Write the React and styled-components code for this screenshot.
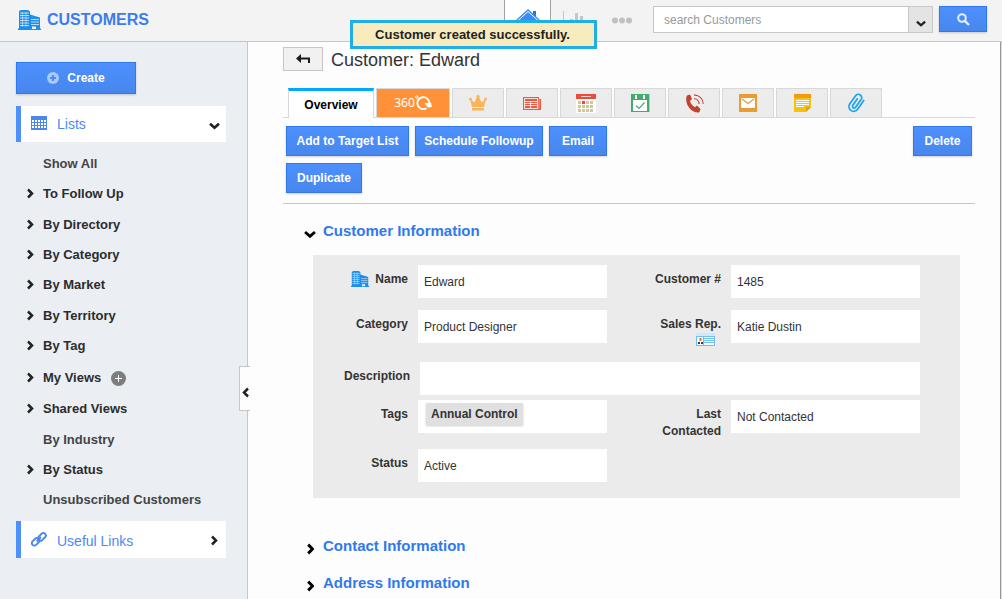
import React from "react";
import styled, { createGlobalStyle, css } from "styled-components";

const GlobalStyle = createGlobalStyle`
  * { box-sizing: border-box; }
  body {
    margin: 0;
    background: #fdfdfd;
    color: #333;
    font-family: "Liberation Sans", Arial, sans-serif;
    font-size: 12px;
  }
  button, input { font: inherit; }
  button { cursor: pointer; }
`;

/* ---------- shell ---------- */

const Page = styled.div`
  display: flex;
  flex-direction: column;
  min-height: 100vh;
`;

const Header = styled.header`
  position: relative;
  display: flex;
  align-items: stretch;
  justify-content: space-between;
  height: 42px;
  padding: 0 15px 0 18px;
  background: #f3f3f3;
  border-bottom: 1px solid #c6c6c6;
`;

const Brand = styled.h1`
  display: flex;
  align-items: center;
  gap: 6px;
  margin: 0;
  padding-bottom: 2px;
  color: #3b7ded;
  font-size: 16px;
  line-height: 20px;
`;

const HeaderTools = styled.div`
  display: flex;
  align-items: flex-start;
`;

const HeaderNav = styled.nav`
  display: flex;
  align-self: stretch;
  margin-right: 3px;
`;

const NavLink = styled.a`
  display: flex;
  align-items: flex-start;
  justify-content: center;
  width: ${(p) => p.$width};
  padding-top: 8px;
  border: solid transparent;
  border-width: 0 1px;
  ${(p) =>
    p.$active &&
    css`
      background: #fff;
      border-color: #a3a3a3;
    `}
`;

const SearchForm = styled.form`
  display: flex;
  height: 27px;
  margin-top: 6px;
`;

const SearchInput = styled.input`
  width: 255px;
  padding: 0 10px;
  border: 1px solid #c8c8c8;
  border-right: 0;
  border-radius: 0;
  background: #fff;
  outline: 0;
  &::placeholder { color: #999; opacity: 1; }
`;

const ScopeButton = styled.button`
  display: flex;
  align-items: center;
  justify-content: center;
  width: 25px;
  margin-right: 6px;
  padding: 8px 0 0;
  border: 1px solid #c8c8c8;
  background: #e4e4e4;
`;

const Toast = styled.div`
  position: absolute;
  top: 20px;
  left: 350px;
  z-index: 2;
  width: 247px;
  padding: 0 2px 0 0;
  border: 3px solid #1eaee8;
  background: #f8ebbd;
  color: #222;
  font-size: 13px;
  font-weight: bold;
  line-height: 23px;
  text-align: center;
`;

const Body = styled.div`
  display: flex;
  flex: 1;
`;

/* ---------- buttons ---------- */

const PrimaryButton = styled.button`
  display: inline-flex;
  align-items: center;
  justify-content: center;
  gap: 8px;
  width: ${(p) => p.$width || "auto"};
  height: ${(p) => p.$height || "30px"};
  padding: 0 8px;
  border: 1px solid #3079ed;
  background: linear-gradient(#4d90fe, #4787ed);
  color: #fff;
  font-weight: bold;
  white-space: nowrap;
  box-shadow: 0 1px 2px rgba(0, 0, 0, 0.18);
`;

/* ---------- sidebar ---------- */

const Sidebar = styled.aside`
  position: relative;
  flex: none;
  width: 248px;
  padding: 20px 21px 20px 16px;
  background: #ebeff4;
  border-right: 1px solid #c6c6c6;
`;

const SideHeading = styled.button`
  display: flex;
  align-items: center;
  width: 100%;
  height: ${(p) => p.$height};
  margin-top: ${(p) => p.$top};
  padding: 0 6px 0 10px;
  border: 0;
  border-left: 5px solid #4d90fe;
  background: #fff;
  color: #4a8af4;
  font-size: 14px;
  text-align: left;
`;

const SideIcon = styled.span`
  display: flex;
  padding-bottom: 2px;
`;

const SideLabel = styled.span`
  flex: 1;
  margin-left: 10px;
  padding-top: ${(p) => p.$pad || "0"};
`;

const SideMark = styled.span`
  display: flex;
  justify-content: center;
  width: 12px;
  padding-top: ${(p) => p.$pad};
`;

const ViewList = styled.ul`
  display: flex;
  flex-direction: column;
  min-height: 367px;
  margin: 6px 0;
  padding: 0 0 0 10px;
  list-style: none;
`;

const ViewItem = styled.li`
  display: flex;
  flex: 1;
  align-items: center;
`;

const ViewMark = styled.span`
  display: flex;
  width: 17px;
`;

const ViewLink = styled.a`
  color: ${(p) => (p.$plain ? "#444" : "#2c2c2c")};
  font-size: 13px;
  font-weight: bold;
  text-decoration: none;
`;

const AddView = styled.button`
  display: flex;
  margin-left: 10px;
  padding: 2px 0 0;
  border: 0;
  background: none;
`;

const Collapse = styled.button`
  position: absolute;
  top: 324px;
  right: -3px;
  display: flex;
  align-items: center;
  justify-content: center;
  width: 11px;
  height: 45px;
  padding: 8px 0 0 1px;
  border: 1px solid #c6c6c6;
  border-right: 0;
  background: #fdfdfd;
`;

/* ---------- main ---------- */

const Main = styled.main`
  flex: 1;
  min-width: 0;
  padding: 5px 25px 5px 35px;
`;

const ScrollEdge = styled.div`
  width: 2px;
  background: #dcdcd8;
  border-left: 1px solid #999;
`;

const TitleRow = styled.div`
  display: flex;
  align-items: center;
  gap: 8px;
  margin-bottom: 17px;
`;

const BackButton = styled.button`
  display: flex;
  align-items: center;
  justify-content: center;
  width: 40px;
  height: 24px;
  padding: 0;
  border: 1px solid #c6c6c6;
  background: #f1f1f1;
`;

const Title = styled.h2`
  margin: 0;
  font-size: 18px;
  font-weight: normal;
  line-height: 22px;
  padding-top: 2px;
`;

const Tabs = styled.div`
  display: flex;
  align-items: stretch;
  gap: 2px;
  height: 30px;
  padding-left: 5px;
  border-bottom: 1px solid #d8d8d8;
`;

const tabKinds = {
  icon: css`
    width: 52px;
    background: #ececec;
  `,
  active: css`
    width: 86px;
    margin-bottom: -1px;
    border-top: 3px solid #00a8ff;
    background: #fff;
    color: #000;
  `,
  orange: css`
    width: 74px;
    background: #ff9238;
  `,
};

const Tab = styled.button`
  display: flex;
  align-items: center;
  justify-content: center;
  padding: 0;
  border: 1px solid #d8d8d8;
  border-bottom: 0;
  font-weight: bold;
  ${(p) => tabKinds[p.$kind || "icon"]}
`;

const Actions = styled.div`
  display: flex;
  align-items: flex-start;
  justify-content: space-between;
  padding: 8px 3px 10px;
  border-bottom: 1px solid #c6c6c6;
`;

const ActionGroup = styled.div`
  display: flex;
  flex: 0 1 55%;
  flex-wrap: wrap;
  gap: 7px 6px;
`;

const SectionHeader = styled.h3`
  margin: ${(p) => p.$top} 0 0;
  font-size: 15px;
  line-height: 20px;
`;

const SectionToggle = styled.button`
  display: flex;
  align-items: center;
  padding: 0 0 0 21px;
  border: 0;
  background: none;
  color: #3079ed;
  font-weight: bold;
`;

const SectionMark = styled.span`
  display: flex;
  justify-content: center;
  width: 12px;
  margin-right: 7px;
  padding-top: 6px;
`;

const Panel = styled.div`
  margin: 14px 15px 0 30px;
  padding: 10px 40px 0 0;
  background: #ebebeb;
`;

const FormRow = styled.div`
  display: grid;
  grid-template-columns: ${(p) =>
    p.$wide ? "107px 1fr" : "105px 1fr 124px 1fr"};
  align-items: start;
  padding-bottom: ${(p) => p.$gap};
`;

const Label = styled.label`
  padding: 6px 10px 0 0;
  padding-left: ${(p) => (p.$narrow ? "50px" : "0")};
  font-weight: bold;
  line-height: 17px;
  text-align: right;
`;

const LabelIcon = styled.span`
  display: inline-block;
  height: 17px;
  margin-right: 6px;
  vertical-align: top;
`;

const RepIcon = styled.span`
  display: flex;
  justify-content: flex-end;
  height: 16px;
  padding-right: 6px;
`;

const Field = styled.input`
  width: 100%;
  min-width: 0;
  height: 33px;
  padding: 0 6px;
  border: 0;
  border-radius: 0;
  background: #fff;
  color: #333;
  outline: 0;
`;

const TagBox = styled.div`
  display: flex;
  height: 33px;
  padding: 3px 8px;
  background: #fff;
`;

const Tag = styled.span`
  height: 22px;
  padding: 0 5px;
  background: #e0e0e0;
  font-weight: bold;
  line-height: 22px;
  box-shadow: 0 1px 2px rgba(0, 0, 0, 0.2);
`;

/* ---------- icons ---------- */

const chevronPaths = {
  right: "M2 1.5 L6 5.5 L2 9.5",
  left: "M6 1.5 L2 5.5 L6 9.5",
};

const Chevron = ({ dir = "right", color = "#222", size = 9, weight = 2.5 }) => (
  <svg width={(size * 8) / 11} height={size} viewBox="0 0 8 11" fill="none" stroke={color} strokeWidth={weight}>
    <path d={chevronPaths[dir]} />
  </svg>
);

const ChevronDown = ({ color = "#222", size = 11 }) => (
  <svg width={size} height={(size * 8) / 11} viewBox="0 0 11 8" fill="none" stroke={color} strokeWidth="2.6">
    <path d="M1 1.8 L5.5 5.8 L10 1.8" />
  </svg>
);

const Building = ({ width, height, bg }) => (
  <svg width={width} height={height} viewBox="0 0 23 20" preserveAspectRatio="none">
    <path d="M1 1 L3 0 H10 L12 1.5 V20 H1Z M12 4.5 L22 7.5 V20 H12Z" fill="#1c8fee" />
    <path d="M0 18.5H23V20H0Z" fill="#1c8fee" />
    <path
      d="M2 3H11M2 5.5H11M2 8H11M2 10.5H11M2 13H11M2 15.5H11M13 9.5H21M13 12H21M13 14.5H21"
      stroke={bg}
      strokeWidth="1"
      opacity=".75"
    />
    <path d="M4.5 2V17M8 2V17" stroke={bg} strokeWidth=".8" opacity=".6" />
    <path d="M14 16.5h4v2.5h-4z" fill={bg} />
  </svg>
);

const HomeIcon = () => (
  <svg width="24" height="24" viewBox="0 0 24 24">
    <path d="M17 3h3v7h-3z" fill="#2a6fe0" />
    <path d="M12 1 L24 12 H0Z" fill="#3b8cf8" />
    <path d="M1.5 13 L12 3.5 L22.5 13" fill="none" stroke="#fff" strokeWidth="1" />
    <path d="M4 13h16v10H4z" fill="#3b8cf8" />
  </svg>
);

const ChartIcon = () => (
  <svg width="22" height="20" viewBox="0 0 22 20" fill="#c6c6c6">
    <path d="M1 3h1v14H1zM8 11h3v6H8zM13 5h3v12h-3zM18 8h3v9h-3zM1 17h21v1H1z" />
  </svg>
);

const DotsIcon = () => (
  <svg width="20" height="24" viewBox="0 0 20 24" fill="#c0c0c0">
    <circle cx="3" cy="12.500" r="3" />
    <circle cx="10" cy="12.500" r="3" />
    <circle cx="17" cy="12.500" r="3" />
  </svg>
);

const SearchIcon = () => (
  <svg width="13" height="13" viewBox="0 0 13 13" fill="none" stroke="#e6efff" strokeWidth="2">
    <circle cx="5" cy="5" r="3.8" />
    <path d="M7.8 7.8 L12 12" strokeWidth="2.4" />
  </svg>
);

const CreateIcon = () => (
  <svg width="12" height="12" viewBox="0 0 12 12">
    <circle cx="6" cy="6" r="6" fill="#a9c9ff" />
    <path d="M6 3v6M3 6h6" stroke="#4a8bf5" strokeWidth="2" />
  </svg>
);

const AddIcon = () => (
  <svg width="15" height="15" viewBox="0 0 15 15">
    <circle cx="7.5" cy="7.5" r="7.5" fill="#7d7d7d" />
    <path d="M7.5 4v7M4 7.5h7" stroke="#fff" strokeWidth="1" />
  </svg>
);

const GridIcon = () => (
  <svg width="16" height="14" viewBox="0 0 16 14">
    <path d="M0 0h16v14H0z" fill="#4a86ec" />
    <g fill="#fff">
      {[4, 7, 10].map((y) =>
        [1, 4, 7, 10, 13].map((x) => <rect key={`${x}-${y}`} x={x} y={y} width="2" height="2" />)
      )}
    </g>
  </svg>
);

const LinkIcon = () => (
  <svg width="16" height="16" viewBox="0 0 24 24" fill="none" stroke="#4a86ec" strokeWidth="2.800">
    <rect x="10" y="5" width="13" height="7.500" rx="3.700" transform="rotate(-45 16.500 8.750)" />
    <rect x="0.500" y="12.500" width="13" height="7.500" rx="3.700" transform="rotate(-45 7 16.250)" />
    <path d="M8.500 15.500 L15 9" />
  </svg>
);

const BackIcon = () => (
  <svg width="14" height="10" viewBox="0 0 14 10">
    <path d="M0 4.5 L5 0 V3.5 H14 V9 H12 V5.5 H5 V9Z" fill="#1a1a1a" />
  </svg>
);

const RotateLabel = styled.span`
  color: #fff;
  font-family: "Noto Sans", sans-serif;
  font-size: 12px;
  font-weight: normal;
  line-height: 16px;
`;

const RotateIcon = () => (
  <svg width="17" height="16" viewBox="0 0 17 16" fill="none" stroke="#fff">
    <path d="M11.500 13.200 A6 6 0 1 1 14.300 8" strokeWidth="1.8" />
    <path d="M9.500 8.200 L16 7.500 L17 12 L13 12.500Z" fill="#fff" stroke="none" />
    <circle cx="1.8" cy="2" r="1.2" strokeWidth="1" />
  </svg>
);

const CrownIcon = () => (
  <svg width="18" height="16" viewBox="0 0 18 16" fill="#fbb45c">
    <path d="M1 4 L5.500 7.500 L8 2 H10 L12.500 7.500 L17 4 L15 12 H3Z M3 13h12v2.500H3z" />
    <circle cx="1.5" cy="4.2" r="1.4" />
    <circle cx="9" cy="1.7" r="1.7" />
    <circle cx="16.5" cy="4.2" r="1.4" />
  </svg>
);

const NewsIcon = () => (
  <svg width="18" height="13" viewBox="0 0 18 13">
    <path d="M0 0h16v2h2v11H0z" fill="#ea5b43" />
    <path d="M1 1h14v11H1z" fill="#f7dcd6" />
    <path d="M2 2h12v2H2zM2 5h5v1H2zM2 7h5v1H2zM2 9h5v2H2zM8 5h6v1H8zM8 7h6v1H8zM8 9h6v2H8z" fill="#ea5b43" />
    <path d="M16 2v10" stroke="#f9d0c8" strokeWidth=".6" />
  </svg>
);

const CalendarIcon = () => (
  <svg width="20" height="19" viewBox="0 0 20 19">
    <path d="M0 0h20v19H0z" fill="#fff" />
    <path d="M0 0h20v5H0z" fill="#e84c3d" />
    <path d="M5 2h10v1H5z" fill="#fbd0cb" />
    <g fill="#d5c795">
      {[7, 11, 15].map((y) =>
        [2, 6, 10, 14].map((x) => <rect key={`${x}-${y}`} x={x} y={y} width="3" height="3" />)
      )}
    </g>
    <path d="M6 7h3v3H6z" fill="#e84c3d" />
  </svg>
);

const TaskIcon = () => (
  <svg width="19" height="18" viewBox="0 0 19 18">
    <path d="M0 0h18v18H0z" fill="#43ad70" />
    <path d="M18 0h1v18h-1z" fill="#a5d5b8" />
    <path d="M2 6h14v11H2zM4 1h2v4H4zM12 1h2v4h-2z" fill="#fff" />
    <path d="M5 11.500 L8 14.500 L13.500 8.500" fill="none" stroke="#43ad70" strokeWidth="1.200" />
  </svg>
);

const PhoneIcon = () => (
  <svg width="19" height="19" viewBox="0 0 19 19">
    <path
      d="M2 1.500 L5 .5 L7 5 L5 7 C5.500 9.500 7.500 12 10 13.200 L12 11.500 L15.500 15 L14.500 18 C13 19.500 7 18 4 13.500 C1 9.500 .5 4 2 1.500Z"
      fill="#c0432b"
    />
    <g fill="none" stroke="#c0432b" strokeWidth="1.100">
      <path d="M9 4.500 C12 5 14 7 14.200 10" />
      <path d="M9 .9 C14.500 1.400 18 5 18.200 10" />
    </g>
  </svg>
);

const MailIcon = () => (
  <svg width="18" height="18" viewBox="0 0 18 18">
    <path d="M0 0h18v18H0z" fill="#ea9c34" />
    <rect x="2" y="4" width="14" height="10" rx="1" fill="#fff" />
    <path d="M3 5 L9 9.500 L15 5" fill="none" stroke="#ea9c34" strokeWidth="1.200" />
  </svg>
);

const NoteIcon = () => (
  <svg width="17" height="18" viewBox="0 0 17 18">
    <path d="M0 0h17v13l-5 5H0z" fill="#f4c30c" />
    <path d="M0 0h17v4H0zM17 13l-5 5v-5z" fill="#f39a12" />
    <path d="M2 6.500h13M2 8.500h13M2 10.500h13M2 12.500h8" stroke="#fff" strokeWidth="1" />
  </svg>
);

const ClipIcon = () => (
  <svg width="19" height="20" viewBox="0 0 24 24" fill="none" stroke="#1ca3f2" strokeWidth="2.200" strokeLinecap="round">
    <path
      transform="rotate(-10 12 12)"
      d="M21.500 10.500 L12 20 a6 6 0 0 1-8.500-8.500 L12.500 2.800 a4.200 4.200 0 0 1 6 6 L9.500 17.500 a2.200 2.200 0 0 1-3-3 L14 7"
    />
  </svg>
);

const CardIcon = () => (
  <svg width="19" height="13" viewBox="0 0 19 13">
    <path d="M0 0h19v3H0z" fill="#d3e8f6" />
    <path d="M0 3h19v10H0z" fill="#6fbdf5" />
    <path d="M1 4h6v8H1zM8 4h10v1H8zM8 6h10v1H8zM8 8h10v1H8zM8 10h10v2H8z" fill="#fff" />
    <path d="M3.500 5h2v3h-2z" fill="#c0705a" />
    <path d="M2 9h2v2H2zM5 9h2v2H5z" fill="#343a55" />
  </svg>
);

/* ---------- page ---------- */

const views = [
  { name: "Show All", plain: true },
  { name: "To Follow Up" },
  { name: "By Directory" },
  { name: "By Category" },
  { name: "By Market" },
  { name: "By Territory" },
  { name: "By Tag" },
  { name: "My Views", add: true },
  { name: "Shared Views" },
  { name: "By Industry", plain: true },
  { name: "By Status" },
  { name: "Unsubscribed Customers", plain: true },
];

const iconTabs = [
  ["Key customer", CrownIcon],
  ["News", NewsIcon],
  ["Calendar", CalendarIcon],
  ["Tasks", TaskIcon],
  ["Calls", PhoneIcon],
  ["Emails", MailIcon],
  ["Notes", NoteIcon],
  ["Documents", ClipIcon],
];

const Section = ({ title, top, open }) => (
  <SectionHeader $top={top}>
    <SectionToggle type="button" aria-expanded={!!open}>
      <SectionMark>
        {open ? <ChevronDown color="#000" size={12} /> : <Chevron color="#000" size={12} weight={2.7} />}
      </SectionMark>
      {title}
    </SectionToggle>
  </SectionHeader>
);

export default function App() {
  return (
    <Page>
      <GlobalStyle />
      <Header>
        <Brand>
          <Building width={23} height={20} bg="#f3f3f3" />
          CUSTOMERS
        </Brand>
        <HeaderTools>
          <HeaderNav>
            <NavLink href="#home" $active $width="47px" aria-label="Home"><HomeIcon /></NavLink>
            <NavLink href="#reports" $width="43px" aria-label="Reports"><ChartIcon /></NavLink>
            <NavLink href="#more" $width="56px" aria-label="More"><DotsIcon /></NavLink>
          </HeaderNav>
          <SearchForm role="search">
            <SearchInput type="text" placeholder="search Customers" aria-label="Search customers" />
            <ScopeButton type="button" aria-label="Search scope"><ChevronDown size={10} /></ScopeButton>
            <PrimaryButton type="button" $width="48px" $height="26px" aria-label="Search">
              <SearchIcon />
            </PrimaryButton>
          </SearchForm>
        </HeaderTools>
        <Toast role="status">Customer created successfully.</Toast>
      </Header>

      <Body>
        <Sidebar>
          <PrimaryButton type="button" $width="120px" $height="32px">
            <CreateIcon />
            Create
          </PrimaryButton>
          <SideHeading type="button" $height="36px" $top="12px" aria-expanded="true">
            <SideIcon><GridIcon /></SideIcon>
            <SideLabel>Lists</SideLabel>
            <SideMark $pad="4px"><ChevronDown size={11} /></SideMark>
          </SideHeading>
          <ViewList>
            {views.map((v) => (
              <ViewItem key={v.name}>
                <ViewMark>{!v.plain && <Chevron size={11} />}</ViewMark>
                <ViewLink href="#view" $plain={v.plain}>{v.name}</ViewLink>
                {v.add && <AddView type="button" aria-label="Add view"><AddIcon /></AddView>}
              </ViewItem>
            ))}
          </ViewList>
          <SideHeading type="button" $height="37px" $top="0" aria-expanded="false">
            <SideIcon><LinkIcon /></SideIcon>
            <SideLabel $pad="2px">Useful Links</SideLabel>
            <SideMark $pad="2px"><Chevron size={11} /></SideMark>
          </SideHeading>
          <Collapse type="button" aria-label="Collapse sidebar"><Chevron dir="left" size={11} /></Collapse>
        </Sidebar>

        <Main>
          <TitleRow>
            <BackButton type="button" aria-label="Back"><BackIcon /></BackButton>
            <Title>Customer: Edward</Title>
          </TitleRow>

          <Tabs role="tablist">
            <Tab type="button" role="tab" aria-selected="true" $kind="active">Overview</Tab>
            <Tab type="button" role="tab" aria-selected="false" $kind="orange">
              <RotateLabel>360</RotateLabel>
              <RotateIcon />
            </Tab>
            {iconTabs.map(([name, Icon]) => (
              <Tab key={name} type="button" role="tab" aria-selected="false" aria-label={name}>
                <Icon />
              </Tab>
            ))}
          </Tabs>

          <Actions>
            <ActionGroup>
              <PrimaryButton type="button" $width="123px">Add to Target List</PrimaryButton>
              <PrimaryButton type="button" $width="128px">Schedule Followup</PrimaryButton>
              <PrimaryButton type="button" $width="58px">Email</PrimaryButton>
              <PrimaryButton type="button" $width="76px">Duplicate</PrimaryButton>
            </ActionGroup>
            <PrimaryButton type="button" $width="59px">Delete</PrimaryButton>
          </Actions>

          <Section title="Customer Information" top="17px" open />
          <Panel>
            <FormRow $gap="12px">
              <Label htmlFor="name">
                <LabelIcon><Building width={18} height={16} bg="#ebebeb" /></LabelIcon>
                Name
              </Label>
              <Field id="name" readOnly value="Edward" />
              <Label htmlFor="number">Customer #</Label>
              <Field id="number" readOnly value="1485" />
            </FormRow>
            <FormRow $gap="13px">
              <Label htmlFor="category">Category</Label>
              <Field id="category" readOnly value="Product Designer" />
              <Label htmlFor="rep">
                Sales Rep.
                <RepIcon><CardIcon /></RepIcon>
              </Label>
              <Field id="rep" readOnly value="Katie Dustin" />
            </FormRow>
            <FormRow $wide $gap="5px">
              <Label htmlFor="description">Description</Label>
              <Field id="description" readOnly value="" />
            </FormRow>
            <FormRow $gap="9px">
              <Label as="span">Tags</Label>
              <TagBox><Tag>Annual Control</Tag></TagBox>
              <Label htmlFor="last" $narrow>Last Contacted</Label>
              <Field id="last" readOnly value="Not Contacted" />
            </FormRow>
            <FormRow $gap="16px">
              <Label htmlFor="status">Status</Label>
              <Field id="status" readOnly value="Active" />
            </FormRow>
          </Panel>

          <Section title="Contact Information" top="38px" />
          <Section title="Address Information" top="17px" />
        </Main>
        <ScrollEdge />
      </Body>
    </Page>
  );
}
